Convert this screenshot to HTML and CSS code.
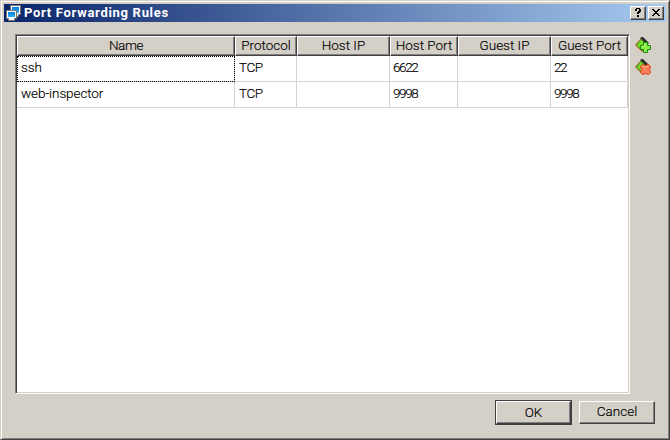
FILE: index.html
```html
<!DOCTYPE html>
<html lang="en">
<head>
<meta charset="utf-8">
<title>Port Forwarding Rules</title>
<link rel="stylesheet" href="styles.css">
</head>
<body>
<div class="window">
  <header class="titlebar">
    <svg class="app-icon" width="16" height="16" viewBox="0 0 16 16" shape-rendering="crispEdges">
      <defs><linearGradient id="screen" x1="0" y1="0" x2="0" y2="1"><stop offset="0" stop-color="#0879de"/><stop offset="1" stop-color="#29b6f8"/></linearGradient></defs>
      <path fill="#777" d="M4 0h11v10h-2v2H5v-2H4z"/><path fill="#fff" d="M5 1h9v8h-2v2H6V9H5z"/><path fill="url(#screen)" d="M6 2h7v6H6z"/>
      <path fill="#777" d="M0 5h11v9H9v2H2v-2H0z"/><path fill="#fff" d="M1 6h9v7H8v2H3v-2H1z"/><path fill="url(#screen)" d="M2 7h7v5H2z"/>
    </svg>
    <h1>Port Forwarding Rules</h1>
    <div class="controls">
      <button class="raised control" aria-label="Help"><svg width="8" height="9" viewBox="0 0 8 9" shape-rendering="crispEdges"><path d="M2 0h4v1h1v3H6v1H5v1H3V4h1V3h1V1H3v2H1V1h1zM3 7h2v2H3z"/></svg></button>
      <button class="raised control" aria-label="Close"><svg width="8" height="7" viewBox="0 0 8 7" shape-rendering="crispEdges"><path d="M0 0h2v1h1v1h2V1h1V0h2v1H7v1H6v1H5v1h1v1h1v1h1v1H6V6H5V5H3v1H2v1H0V6h1V5h1V4h1V3H2V2H1V1H0z"/></svg></button>
    </div>
  </header>
  <main class="content">
    <div class="table-frame">
      <table>
        <colgroup><col class="name"><col class="protocol"><col class="ip"><col class="host-port"><col class="ip"><col class="guest-port"></colgroup>
        <thead><tr><th>Name</th><th>Protocol</th><th>Host IP</th><th>Host Port</th><th>Guest IP</th><th>Guest Port</th></tr></thead>
        <tbody>
          <tr><td class="focused">ssh</td><td class="caps">TCP</td><td></td><td class="num">6622</td><td></td><td class="num">22</td></tr>
          <tr><td>web-inspector</td><td class="caps">TCP</td><td></td><td class="num">9998</td><td></td><td class="num">9998</td></tr>
        </tbody>
      </table>
    </div>
    <div class="tools">
      <svg width="16" height="16" viewBox="0 0 16 16">
        <path fill="#c8562b" d="M0 8 7 0l6 6-6 9z"/><path fill="#2b2d2d" d="m5 1 2-1h1l6 6-2 2z"/><path fill="#2da51b" d="m1 8 5-6 6 6-5 6z"/><path fill="#7bdc28" d="m2 8 4-5 5 5-4 5z"/>
        <path fill="#8bee42" stroke="#168912" d="M8.500 5.500h4v3h3v4h-3v3h-4v-3h-3v-4h3z"/><path fill="none" stroke="#baff7c" d="M9.500 7v2.500h-3"/>
      </svg>
      <svg width="16" height="16" viewBox="0 0 16 16">
        <path fill="#c8562b" d="M0 8 7 0l6 6-6 9z"/><path fill="#2b2d2d" d="m5 1 2-1h1l6 6-2 2z"/><path fill="#2da51b" d="m1 8 5-6 6 6-5 6z"/><path fill="#7bdc28" d="m2 8 4-5 5 5-4 5z"/>
        <path fill="#ff8058" stroke="#df361c" d="m7.500 5.500 3 1 3-1 2 2-1 3 1 3-2 2-3-1-3 1-2-2 1-3-1-3z"/><path fill="none" stroke="#ffb18c" d="m7 8 1-1 2.500 1L13 7"/>
      </svg>
    </div>
  </main>
  <footer class="actions">
    <button class="default"><span class="raised face">OK</span></button>
    <button class="raised cancel">Cancel</button>
  </footer>
</div>
</body>
</html>
```
FILE: styles.css
```css
* { box-sizing: border-box; }
body { margin: 0; font: 300 13.5px/16px Roboto, "Liberation Sans", sans-serif; color: #000; -webkit-text-stroke: .15px #000; }
button { padding: 0; font: inherit; color: inherit; }
.window { width: 670px; height: 440px; padding: 2px; background: #d4d0c8; border: 1px solid; border-color: #d4d0c8 #404040 #404040 #d4d0c8; box-shadow: inset 1px 1px #fff, inset -1px -1px #808080; }
.titlebar { display: flex; align-items: center; height: 18px; margin: 1px 1px 0; padding: 0 2px; background: linear-gradient(90deg, #0a246a, #a6caf0); }
.app-icon { display: block; flex: none; }
h1 { flex: 1; margin: 0 0 0 2px; color: #fff; font-size: 13px; line-height: 18px; font-weight: 700; letter-spacing: .7px; -webkit-text-stroke: 0; }
.controls { display: flex; gap: 2px; }
.raised { background: #d4d0c8; border: 1px solid; border-color: #fff #404040 #404040 #fff; box-shadow: inset -1px -1px #808080; }
.control { display: flex; align-items: center; justify-content: center; width: 16px; height: 14px; padding: 0 1px 1px 0; }
.content { display: flex; gap: 5px; margin: 12px 0 0 12px; }
.table-frame { width: 615px; height: 360px; border: 1px solid; border-color: #808080 #fff #fff #808080; background: #fff; padding: 1px; box-shadow: inset 1px 1px #404040, inset -1px -1px #d4d0c8; }
table { width: 611px; table-layout: fixed; border-collapse: separate; border-spacing: 0; }
.name { width: 218px; }
.protocol { width: 62px; }
.ip { width: 93px; }
.host-port { width: 68px; }
.guest-port { width: 77px; }
th { height: 20px; padding: 0 0 2px; font-weight: 300; line-height: 16px; background: #d4d0c8; border: 1px solid; border-color: #fff #404040 #404040 #fff; box-shadow: inset -1px -1px #808080; white-space: nowrap; }
th:first-child { letter-spacing: -.4px; }
td { height: 26px; padding: 0 0 3px 4px; border: solid #d4d4d4; border-width: 0 1px 1px 0; white-space: nowrap; letter-spacing: -.1px; }
.caps { letter-spacing: -.4px; }
.num { padding-left: 3px; font-size: 13.5px; letter-spacing: -1.4px; }
.focused { outline: 1px dotted #000; outline-offset: -1px; }
.tools { display: flex; flex-direction: column; gap: 6px; padding-top: 3px; }
.actions { display: flex; justify-content: flex-end; align-items: center; gap: 7px; margin: 6px 12px 0 0; }
.default { width: 77px; height: 25px; border: 1px solid #404040; background: #404040; }
.face { display: block; width: 75px; height: 23px; line-height: 21px; }
.cancel { width: 76px; height: 23px; padding-bottom: 2px; line-height: 19px; }
```
